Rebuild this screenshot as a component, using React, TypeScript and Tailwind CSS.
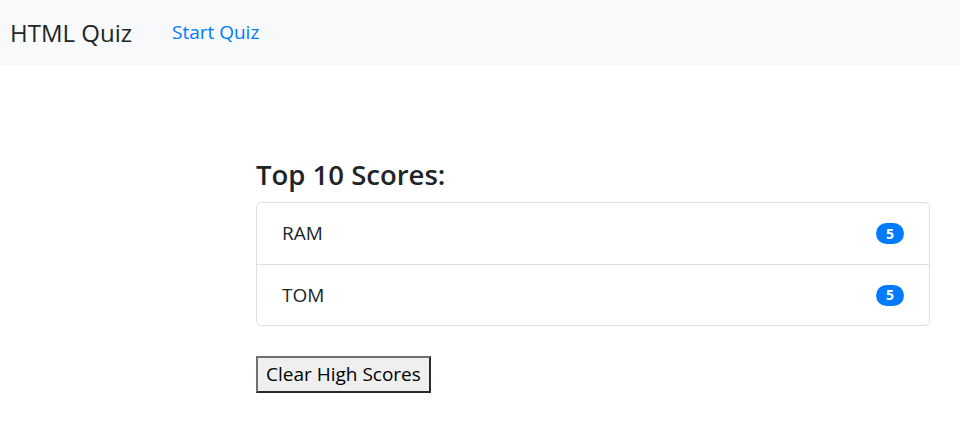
export default function App() {
  const scores = [
    { name: "RAM", score: 5 },
    { name: "TOM", score: 5 },
  ];
  return (
    <div className="w-[960px] h-[432px] bg-white text-[#212529]" style={{ fontFamily: '"Open Sans", "Noto Sans", sans-serif' }}>
      <nav className="h-[65px] bg-[#f8f9fa] flex items-center px-[10px]">
        <span className="text-[24px] leading-none text-[#212529]">HTML Quiz</span>
        <a className="ml-[40px] text-[19px] text-[#007bff] leading-none">Start Quiz</a>
      </nav>
      <div className="pl-[256px] pr-[30px] pt-[93px]">
        <h3 className="text-[27.5px] font-semibold leading-[33px] mb-[11px]">Top 10 Scores:</h3>
        <ul className="border border-[#dfdfdf] rounded-[5px]">
          {scores.map((s, i) => (
            <li
              key={s.name}
              className={`flex items-center justify-between h-[61px] pl-[25px] pr-[25px] text-[19px] ${i > 0 ? "border-t border-[#dfdfdf]" : ""}`}
            >
              <span>{s.name}</span>
              <span className="bg-[#007bff] text-white text-[14px] font-bold rounded-full w-[28px] h-[21px] flex items-center justify-center leading-none">
                {s.score}
              </span>
            </li>
          ))}
        </ul>
        <button className="mt-[30px] h-[37px] px-[8px] bg-[#efefef] border-2 border-t-[#707070] border-l-[#707070] border-r-[#2a2a2a] border-b-[#2a2a2a] text-[19px] text-black leading-none">
          Clear High Scores
        </button>
      </div>
    </div>
  );
}
